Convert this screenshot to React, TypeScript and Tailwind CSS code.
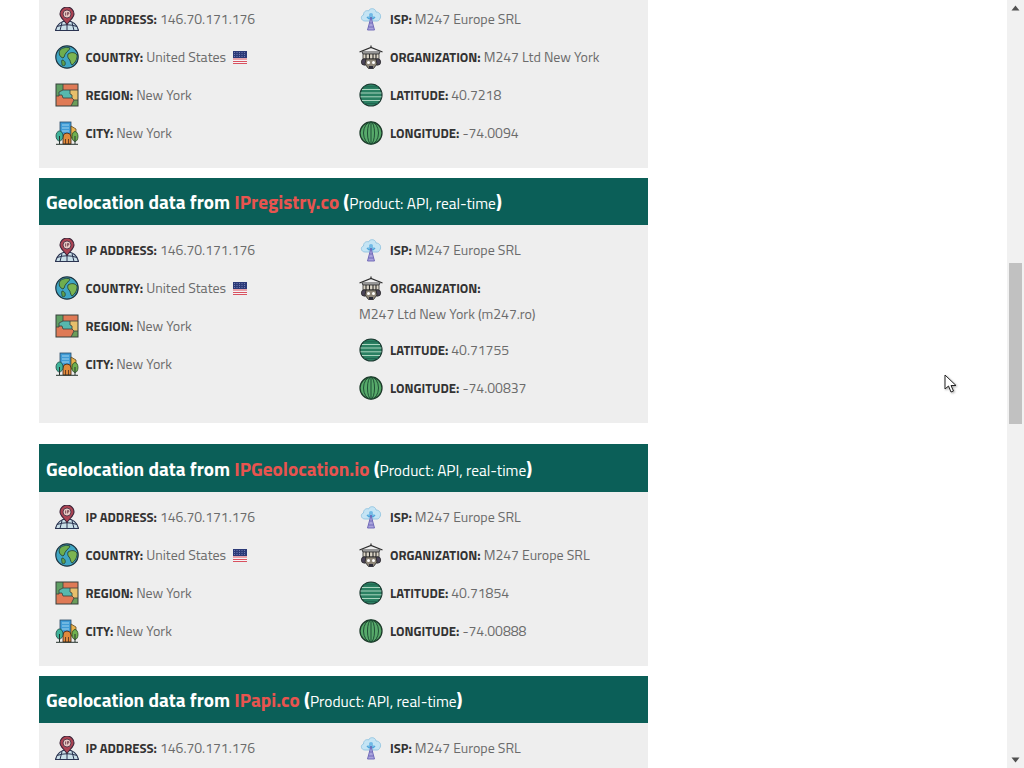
// IP lookup results page, scrolled part way down, with a drawn scrollbar and pointer.

type Row = { icon: () => React.ReactElement; label: string; value: string; flag?: boolean; wrap?: boolean };

function IpIcon() {
  return (
    <svg viewBox="0 0 24 24" width={24} height={24} aria-hidden="true">
      <path d="M0.500 23.500 Q3 14 12 14 Q21 14 23.500 23.500 Z" fill="#c9dfe8" stroke="#2a3350" strokeWidth="1.200" />
      <path d="M7 15.500 L5 23.500 M17 15.500 L19 23.500 M12 17 V23.500 M2 19.500 Q12 16 22 19.500" fill="none" stroke="#2a3350" strokeWidth="1" />
      <path d="M12 17.500 C9 13 5 10.500 5 7 A7 7 0 0 1 19 7 C19 10.500 15 13 12 17.500 Z" fill="#ad4453" stroke="#3a2438" strokeWidth="1.100" />
      <circle cx="12" cy="7" r="4" fill="#e9c9c4" stroke="#3a2438" strokeWidth="0.800" />
      <path d="M10.500 5.500 V8.500 M12.300 5.500 V8.500 M12.300 5.600 H13.800 V7 H12.300" fill="none" stroke="#5b2a38" strokeWidth="0.700" />
    </svg>
  );
}

function GlobeIcon() {
  return (
    <svg viewBox="0 0 24 24" width={24} height={24} aria-hidden="true">
      <circle cx="12" cy="12" r="11.200" fill="#3fa6c4" stroke="#1f3440" strokeWidth="1.200" />
      <path d="M5 5 C8 2 13 2 15 3 C14 6 12 6 11 8 C9 10 10 12 8 13 C5 12 3 9 5 5 Z" fill="#6fae4f" stroke="#1f3a30" strokeWidth="0.800" />
      <path d="M13 9 C16 7 20 7 22 10 C22.500 14 20 18 17 20 C15 18 15.500 15 14 14 C12.500 12.500 12.500 10.500 13 9 Z" fill="#7cb552" stroke="#1f3a30" strokeWidth="0.800" />
      <path d="M7 15 C9 15 11 17 10 20 C9 21 8 21 7 20 C7 18 6 17 7 15 Z" fill="#5d9f4c" stroke="#1f3a30" strokeWidth="0.700" />
    </svg>
  );
}

function RegionIcon() {
  return (
    <svg viewBox="0 0 24 24" width={24} height={24} aria-hidden="true">
      <rect x="1" y="1" width="22" height="22" fill="#df7a56" />
      <path d="M1 1 H8 V7 L4 9 V13 H1 Z" fill="#5f9f63" />
      <path d="M4 9 L8 7 H15 V11 L17 12 V15 H8 L7 12 H4 Z" fill="#57b8ad" />
      <path d="M15 7 H23 V17 H19 L17 15 V12 L15 11 Z" fill="#e7bf6b" />
      <path d="M19 17 H23 V23 H16 Z" fill="#6b9e5a" />
      <path d="M8 1 V7 L4 9 V13 H1 M8 7 H23 M15 7 V11 L17 12 V15 L19 17 H23 M8 15 H17 M8 15 L7 12 H4 M19 17 L16 23" fill="none" stroke="#37403c" strokeWidth="0.800" />
      <rect x="1" y="1" width="22" height="22" fill="none" stroke="#37403c" strokeWidth="1" />
    </svg>
  );
}

function CityIcon() {
  return (
    <svg viewBox="0 0 24 24" width={24} height={24} aria-hidden="true">
      <rect x="5" y="1" width="11" height="15" fill="#3f9bd6" stroke="#2a4a66" strokeWidth="0.800" />
      <path d="M7 4 H14 M7 7 H14 M7 10 H14" stroke="#9fd3ee" strokeWidth="1" />
      <path d="M16 5 L21 8 V17 H16 Z" fill="#e8b04a" stroke="#5a4a2a" strokeWidth="0.800" />
      <path d="M8 23 V16 A4 4 0 0 1 16 16 V23 Z" fill="#e08a3c" stroke="#4a2f1f" strokeWidth="0.900" />
      <path d="M10.500 23 V18 M13.500 23 V18" stroke="#4a2f1f" strokeWidth="0.800" />
      <ellipse cx="4.500" cy="15" rx="3.500" ry="5" fill="#3fb39a" stroke="#1f4a42" strokeWidth="0.800" />
      <ellipse cx="20" cy="15.500" rx="3" ry="5" fill="#6fb04f" stroke="#284a22" strokeWidth="0.800" />
      <path d="M4.500 15 V23 M20 15 V23 M1 23.300 H23" stroke="#26342e" strokeWidth="1" />
    </svg>
  );
}

function IspIcon() {
  return (
    <svg viewBox="0 0 24 24" width={24} height={24} aria-hidden="true">
      <path d="M6 14 C2 14 1 9 4.500 8 C4.500 4 8 3 9.500 4 C11 0.500 16.500 1 17 5 C21 5 23 9 20.500 12.500 C19.500 14 18.500 14 18 14 Z" fill="#c4e4f4" stroke="#8fc3e0" strokeWidth="0.900" />
      <path d="M8 10 A5 5 0 0 0 16 10" fill="none" stroke="#4fa6dc" strokeWidth="1.300" />
      <path d="M9.700 9.300 A3 3 0 0 0 14.300 9.300" fill="none" stroke="#4fa6dc" strokeWidth="1.100" />
      <circle cx="12" cy="8" r="2" fill="#6fb9e6" />
      <path d="M12 10 L8.500 23 H15.500 Z" fill="#a9a3dc" stroke="#6a62b4" strokeWidth="0.900" />
      <path d="M10.500 16 H13.500 M9.500 20 H14.500" stroke="#6a62b4" strokeWidth="0.900" />
    </svg>
  );
}

function OrgIcon() {
  return (
    <svg viewBox="0 0 24 24" width={24} height={24} aria-hidden="true">
      <path d="M12 0.500 V3 M0.500 7 L12 2.500 L23.500 7" fill="none" stroke="#2b2b2b" strokeWidth="1.200" />
      <path d="M3 7 H21 L20 9 H4 Z" fill="#f2f2f2" stroke="#2b2b2b" strokeWidth="0.900" />
      <rect x="4" y="9" width="16" height="5" fill="#d9d3c4" stroke="#2b2b2b" strokeWidth="0.800" />
      <path d="M7 9 V14 M10.500 9 V14 M14 9 V14 M17 9 V14" stroke="#2b2b2b" strokeWidth="1.100" />
      <circle cx="5.500" cy="17" r="3.200" fill="#4a4458" stroke="#222" strokeWidth="0.700" />
      <circle cx="18.500" cy="17" r="3.200" fill="#4a4458" stroke="#222" strokeWidth="0.700" />
      <path d="M7 14 H17 L18 19 L14.500 23.500 H9.500 L6 19 Z" fill="#8d8577" stroke="#222" strokeWidth="0.800" />
      <circle cx="9.500" cy="17.500" r="1.500" fill="#fff" />
      <circle cx="14.500" cy="17.500" r="1.500" fill="#fff" />
      <path d="M10 21 H14 V23.500 H10 Z" fill="#2b2b3a" />
    </svg>
  );
}

function LatitudeIcon() {
  return (
    <svg viewBox="0 0 24 24" width={24} height={24} aria-hidden="true">
      <circle cx="12" cy="12" r="11" fill="#2a8062" stroke="#1d3a32" strokeWidth="1.200" />
      <path d="M3 6.500 H21 M1.500 10 H22.500 M1.500 13.800 H22.500 M3 17.500 H21" stroke="#a9d4be" strokeWidth="1" />
      <path d="M4 3.800 H20 M4.500 20.500 H19.500" stroke="#1f6650" strokeWidth="1" />
    </svg>
  );
}

function LongitudeIcon() {
  return (
    <svg viewBox="0 0 24 24" width={24} height={24} aria-hidden="true">
      <circle cx="12" cy="12" r="11" fill="#57aa6a" stroke="#1d3a2a" strokeWidth="1.300" />
      <ellipse cx="12" cy="12" rx="7.500" ry="11" fill="none" stroke="#1f4f36" strokeWidth="1" />
      <ellipse cx="12" cy="12" rx="3.500" ry="11" fill="none" stroke="#1f4f36" strokeWidth="1" />
      <path d="M12 1 V23" stroke="#1f4f36" strokeWidth="1" />
    </svg>
  );
}

function UsFlag() {
  return (
    <svg viewBox="0 0 14 13" width={14} height={13} className="ml-[7px] inline-block" aria-hidden="true">
      <rect width="14" height="13" fill="#f4f4f6" />
      <path d="M0 8 H14 M0 10.500 H14 M0 12.500 H14" stroke="#d9515f" strokeWidth="1" />
      <rect width="14" height="7" fill="#2c3a78" />
      <path d="M1 1.500 H13 M1 3.500 H13 M1 5.500 H13" stroke="#8f9ac8" strokeWidth="0.700" strokeDasharray="1 1.500" />
    </svg>
  );
}

function InfoRow({ icon: Icon, label, value, flag, wrap }: Row) {
  return (
    <div>
      <div className="flex h-[38px] items-center">
        <span className="w-[31px] shrink-0"><Icon /></span>
        <span className="text-[13px] font-bold text-[#333]">{label}:</span>
        {!wrap && <span className="ml-[3px] text-[#6b6b6b]">{value}</span>}
        {flag && <UsFlag />}
      </div>
      {wrap && <div className="-mt-[6px] mb-1 leading-[26px] text-[#6b6b6b]">{value}</div>}
    </div>
  );
}

type Panel = {
  provider?: string;
  headerClass?: string;
  pad: string;
  lat?: string;
  lon?: string;
  org?: string;
  orgWrap?: boolean;
  firstRowOnly?: boolean;
};

const panels: Panel[] = [
  { pad: 'pt-0 pb-4', lat: '40.7218', lon: '-74.0094', org: 'M247 Ltd New York' },
  { provider: 'IPregistry.co', headerClass: 'h-[47px] leading-[48px]', pad: 'pt-[6px] pb-4', lat: '40.71755', lon: '-74.00837', org: 'M247 Ltd New York (m247.ro)', orgWrap: true },
  { provider: 'IPGeolocation.io', headerClass: 'mt-[21px] h-[48px] leading-[49px]', pad: 'pt-[6px] pb-4', lat: '40.71854', lon: '-74.00888', org: 'M247 Europe SRL' },
  { provider: 'IPapi.co', headerClass: 'h-[47px] leading-[48px]', pad: 'pt-[6px] pb-4', firstRowOnly: true },
];

function GeoPanel({ p }: { p: Panel }) {
  return (
    <section className="mb-[10px] last:mb-0">
      {p.provider && (
        <h3 className={`whitespace-nowrap bg-[#0b5f58] pl-[7px] text-[19.2px] font-bold text-white ${p.headerClass}`}>
          Geolocation data from <span className="text-[#e8544f]">{p.provider}</span>{' '}
          (<span className="text-[15.4px] font-normal">Product: API, real-time</span>)
        </h3>
      )}
      <div className={`grid grid-cols-2 bg-[#eeeeee] ${p.pad}`}>
        <div className="pl-[15.5px]">
          <InfoRow icon={IpIcon} label="IP ADDRESS" value="146.70.171.176" />
          {!p.firstRowOnly && (
            <>
              <InfoRow icon={GlobeIcon} label="COUNTRY" value="United States" flag />
              <InfoRow icon={RegionIcon} label="REGION" value="New York" />
              <InfoRow icon={CityIcon} label="CITY" value="New York" />
            </>
          )}
        </div>
        <div className="pl-[15.5px]">
          <InfoRow icon={IspIcon} label="ISP" value="M247 Europe SRL" />
          {!p.firstRowOnly && (
            <>
              <InfoRow icon={OrgIcon} label="ORGANIZATION" value={p.org ?? ''} wrap={p.orgWrap} />
              <InfoRow icon={LatitudeIcon} label="LATITUDE" value={p.lat ?? ''} />
              <InfoRow icon={LongitudeIcon} label="LONGITUDE" value={p.lon ?? ''} />
            </>
          )}
        </div>
      </div>
    </section>
  );
}

function Scrollbar() {
  return (
    <div className="flex h-full w-[17px] shrink-0 flex-col items-center bg-[#f1f1f1]">
      <svg viewBox="0 0 17 17" width={17} height={17} className="shrink-0" aria-hidden="true">
        <path d="M8.500 5.500 L12.500 10.500 H4.500 Z" fill="#505050" />
      </svg>
      <div className="flex-1 self-stretch px-[2px]">
        <div className="mt-[246px] h-[161px] bg-[#c1c1c1]" />
      </div>
      <svg viewBox="0 0 17 17" width={17} height={17} className="shrink-0" aria-hidden="true">
        <path d="M4.500 6.500 H12.500 L8.500 11.500 Z" fill="#505050" />
      </svg>
    </div>
  );
}

export default function App() {
  return (
    <div className="relative flex h-screen overflow-hidden bg-white font-['Titillium_Web','Lato',sans-serif] text-[14px] leading-[26px]">
      <main className="flex-1 pl-[39px]">
        <div className="w-[609px]">
          {panels.map((p, i) => (
            <GeoPanel key={i} p={p} />
          ))}
        </div>
      </main>
      <Scrollbar />
      {/* Mouse pointer caught in the screenshot */}
      <svg
        viewBox="0 0 14 20"
        width={14}
        height={20}
        className="absolute left-[944px] top-[374px] drop-shadow-[1px_1px_1px_rgba(0,0,0,0.35)]"
        aria-hidden="true"
      >
        <path d="M1 1 V15 L4.500 12 L7 18 L9.500 17 L7 11.500 H12 Z" fill="#fff" stroke="#222" strokeWidth="1" />
      </svg>
    </div>
  );
}
